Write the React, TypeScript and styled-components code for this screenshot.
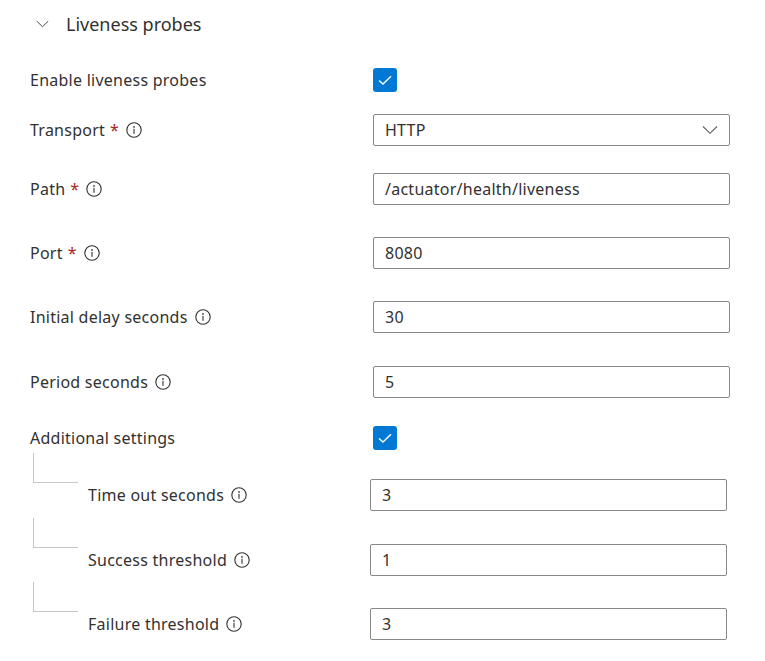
import React from "react";
import styled, { createGlobalStyle } from "styled-components";

const Global = createGlobalStyle`
  html, body { margin: 0; padding: 0; background: #fff; }
  body { font-family: "Noto Sans", "Open Sans", sans-serif; color: #323130; }
`;

const Page = styled.div`
  width: 765px;
  height: 661px;
  padding: 0 35px 0 30px;
  box-sizing: border-box;
  display: flex;
  flex-direction: column;
`;

const Header = styled.div`
  display: flex;
  align-items: center;
  height: 48px;
  padding-left: 6px;
  gap: 17px;
  font-size: 18px;
  color: #323130;
`;

const Row = styled.div<{ $top: number; $nested?: boolean }>`
  display: grid;
  grid-template-columns: ${(p) => (p.$nested ? "340px 357px" : "343px 357px")};
  align-items: center;
  margin-top: ${(p) => p.$top}px;
`;

const LabelCell = styled.div<{ $nested?: boolean }>`
  display: flex;
  align-items: center;
  font-size: 16px;
  letter-spacing: 0.25px;
  height: 32px;
  position: relative;
  padding-left: ${(p) => (p.$nested ? "58px" : "0")};
`;

const Connector = styled.span`
  position: absolute;
  left: 3px;
  top: -26px;
  width: 45px;
  height: 30px;
  border-left: 1px solid #c8c6c4;
  border-bottom: 1px solid #c8c6c4;
  box-sizing: border-box;
`;

const Req = styled.span`
  color: #a4262c;
  margin-left: 5px;
`;

const InfoWrap = styled.span`
  display: inline-flex;
  margin-left: 7px;
`;

const Box = styled.div`
  height: 32px;
  box-sizing: border-box;
  border: 1px solid #8a8886;
  border-radius: 2px;
  display: flex;
  align-items: center;
  padding: 0 11px;
  font-size: 16px;
  letter-spacing: 0.25px;
  color: #323130;
  justify-content: space-between;
`;

const Check = styled.div`
  width: 24px;
  height: 24px;
  border-radius: 3px;
  background: #0078d4;
  display: flex;
  align-items: center;
  justify-content: center;
`;

const Info = () => (
  <InfoWrap>
    <svg width="16" height="16" viewBox="0 0 16 16">
      <circle cx="8" cy="8" r="7.2" fill="none" stroke="#323130" strokeWidth="1.1" />
      <circle cx="8" cy="4.9" r="0.85" fill="#323130" />
      <rect x="7.45" y="6.8" width="1.1" height="5" fill="#323130" />
    </svg>
  </InfoWrap>
);

const CheckMark = () => (
  <Check>
    <svg width="16" height="16" viewBox="0 0 16 16">
      <path d="M2 8.4 L6 12 L14 4.2" fill="none" stroke="#fff" strokeWidth="1.4" />
    </svg>
  </Check>
);

const Chevron = ({ color = "#605e5c", w = 16 }: { color?: string; w?: number }) => (
  <svg width={w} height={w * 0.6} viewBox="0 0 16 9.6">
    <path d="M1 1.5 L8 8.3 L15 1.5" fill="none" stroke={color} strokeWidth="1.1" />
  </svg>
);

type Field = {
  label: string;
  req?: boolean;
  info?: boolean;
  value?: string;
  select?: boolean;
  check?: boolean;
  top: number;
  nested?: boolean;
};

const fields: Field[] = [
  { label: "Enable liveness probes", check: true, top: 16 },
  { label: "Transport", req: true, info: true, value: "HTTP", select: true, top: 18 },
  { label: "Path", req: true, info: true, value: "/actuator/health/liveness", top: 27 },
  { label: "Port", req: true, info: true, value: "8080", top: 32 },
  { label: "Initial delay seconds", info: true, value: "30", top: 32 },
  { label: "Period seconds", info: true, value: "5", top: 33 },
  { label: "Additional settings", check: true, top: 24 },
  { label: "Time out seconds", info: true, value: "3", top: 25, nested: true },
  { label: "Success threshold", info: true, value: "1", top: 33, nested: true },
  { label: "Failure threshold", info: true, value: "3", top: 32, nested: true },
];

export default function App() {
  return (
    <>
      <Global />
      <Page>
        <Header>
          <Chevron color="#323130" w={13} />
          <span>Liveness probes</span>
        </Header>
        {fields.map((f) => (
          <Row key={f.label} $top={f.top} $nested={f.nested}>
            <LabelCell $nested={f.nested}>
              {f.nested && <Connector />}
              {f.label}
              {f.req && <Req>*</Req>}
              {f.info && <Info />}
            </LabelCell>
            {f.check ? (
              <CheckMark />
            ) : (
              <Box>
                <span>{f.value}</span>
                {f.select && <Chevron />}
              </Box>
            )}
          </Row>
        ))}
      </Page>
    </>
  );
}
